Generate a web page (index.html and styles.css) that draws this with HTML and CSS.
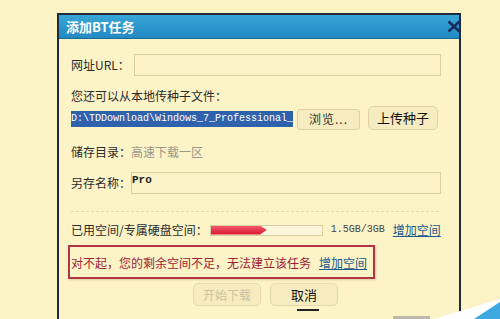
FILE: index.html
```html
<!DOCTYPE html>
<html lang="zh-CN">
<head>
<meta charset="UTF-8" />
<title>添加BT任务</title>
<link rel="stylesheet" href="styles.css">
</head>
<body>
<div class="dialog">
  <div class="titlebar">
    <span class="title">添加BT任务</span>
    <svg class="close" width="14" height="13" viewBox="0 0 14 13"><path d="M1.5 1.5 L12.5 11.5 M12.5 1.5 L1.5 11.5" stroke="#1b2a5e" stroke-width="2.6" fill="none"/></svg>
  </div>
  <div class="content">
    <div class="row r-url">
      <span class="label">网址URL：</span>
      <div class="field"></div>
    </div>
    <div class="row r-hint">您还可以从本地传种子文件：</div>
    <div class="row r-file">
      <div class="filebox"><span class="sel">D:\TDDownload\Windows_7_Professional_</span></div>
      <div class="btn browse">浏览...</div>
      <div class="btn upload">上传种子</div>
    </div>
    <div class="row r-dir">
      <span class="label">储存目录：</span><span class="muted">高速下载一区</span>
    </div>
    <div class="row r-name">
      <span class="label">另存名称：</span>
      <div class="field"><span class="val">Pro</span></div>
    </div>
    <div class="sep"></div>
    <div class="row r-space">
      <span class="label">已用空间/专属硬盘空间：</span>
      <div class="bar"><div class="fill"></div></div>
      <span class="size">1.5GB/3GB</span>
      <a class="link">增加空间</a>
    </div>
    <div class="error">
      <span>对不起，您的剩余空间不足，无法建立该任务</span>
      <a class="link">增加空间</a>
    </div>
    <div class="actions">
      <div class="btn act disabled">开始下载</div>
      <div class="btn act cancel">取消</div>
    </div>
  </div>
</div>
<svg class="swoosh" width="110" height="24" viewBox="0 0 110 24">
  <rect x="3" y="21" width="37" height="3" fill="#bdb9a9"/>
  <polygon points="44,24 110,4 110,24" fill="#ffffff"/>
  <polygon points="84,24 110,7 110,24" fill="#3ea8e0"/>
</svg>
</body>
</html>
```

FILE: styles.css
```css
body { margin: 0; height: 319px; overflow: hidden; background: #fbf2c6; font-family: "Noto Sans CJK SC", "Liberation Sans", sans-serif; font-size: 12px; color: #2b2b2b; position: relative; }
.dialog { margin: 13px 0 0 57px; width: 400px; height: 304px; overflow: hidden; border: 2px solid #1d2c3c; border-bottom: none; background: #fcf3c7; }
.titlebar { height: 23px; background: linear-gradient(#38a6d6, #2389c3); border-bottom: 1px solid #1b6a98; display: flex; align-items: center; justify-content: space-between; }
.title { color: #fff; font-weight: bold; font-size: 13px; padding-left: 7px; }
.close { margin-right: -2px; }
.content { padding: 15px 18px 0 12px; }
.row { display: flex; align-items: center; line-height: 16px; }
.label { white-space: nowrap; }
.field { flex: 1; height: 20px; border: 1px solid #d9cd9e; background: #fcf3c8; display: flex; align-items: center; }
.r-url .field { margin-left: 4px; }
.r-hint { margin-top: 12px; }
.r-file { margin-top: 3px; height: 24px; }
.filebox { width: 224px; height: 18px; display: flex; align-items: center; }
.sel { background: #2f62ad; color: #fff; font-family: "Liberation Mono", monospace; font-size: 10px; line-height: 16px; white-space: nowrap; }
.btn { display: flex; align-items: center; justify-content: center; border: 1px solid #ddd3a6; background: #f6ecbf; border-radius: 3px; box-sizing: border-box; }
.browse { width: 63px; height: 21px; margin-left: 2px; color: #333; letter-spacing: 1px; }
.upload { width: 70px; height: 24px; margin-left: 8px; margin-top: -3px; border-radius: 5px; font-size: 13px; color: #111; }
.r-dir { margin-top: 13px; }
.muted { color: #9a968a; }
.r-name { margin-top: 12px; }
.val { font-family: "Liberation Mono", monospace; font-weight: bold; font-size: 11px; color: #222; margin-top: -6px; }
.sep { margin-top: 17px; border-top: 1px dashed #e2d7a8; margin-right: 2px; }
.r-space { margin-top: 10px; }
.bar { width: 111px; height: 9px; margin-left: 2px; border: 1px solid #d8cea2; background: #fbf6dc; }
.fill { width: 56px; height: 9px; background: linear-gradient(#f2576a, #d8142c); clip-path: polygon(0 0, 88% 0, 100% 50%, 88% 100%, 0 100%); }
.size { font-family: "Liberation Mono", monospace; font-size: 10px; margin-left: 8px; color: #444; }
.link { color: #1b5a8c; text-decoration: underline; margin-left: 8px; }
.error { margin: 7px 0 0 -3px; width: 303px; height: 30px; border: 2px solid #b53346; display: flex; align-items: center; color: #9c2336; box-shadow: 1px 1px 2px rgba(150,120,60,0.3); }
.error span { padding-left: 1px; }
.actions { display: flex; gap: 9px; margin: 4px 0 0 122px; }
.act { width: 68px; height: 23px; border-radius: 5px; border-color: #e4dab0; }
.disabled { color: #c9c2a4; }
.cancel { color: #111; font-size: 13px; position: relative; }
.cancel::after { content: ""; position: absolute; left: 26px; top: 25px; width: 22px; height: 2px; background: #222; }
.swoosh { position: absolute; right: 0; bottom: 0; }
```
